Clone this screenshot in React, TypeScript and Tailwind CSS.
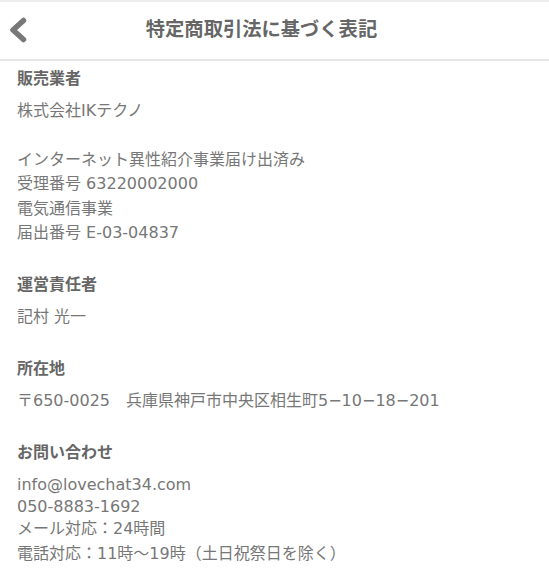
const font = { fontFamily: '"DejaVu Sans", "Noto Sans CJK JP", sans-serif' };

type Section = {
  title: string;
  lines: string[];
};

const sections: Section[] = [
  {
    title: "販売業者",
    lines: [
      "株式会社IKテクノ",
      "",
      "インターネット異性紹介事業届け出済み",
      "受理番号 63220002000",
      "電気通信事業",
      "届出番号 E-03-04837",
    ],
  },
  { title: "運営責任者", lines: ["記村 光一"] },
  {
    title: "所在地",
    lines: ["〒650-0025　兵庫県神戸市中央区相生町5−10−18−201"],
  },
];

const BackIcon = () => (
  <svg width="18" height="26" viewBox="0 0 18 26" fill="none">
    <polyline
      points="14.5,3.5 4,13 14.5,22.5"
      stroke="#787878"
      strokeWidth="5.5"
      strokeLinecap="round"
      strokeLinejoin="round"
    />
  </svg>
);

export default function App() {
  return (
    <div className="min-h-[576px] w-full bg-white text-[#777]" style={font}>
      <header className="relative flex h-[61px] items-center justify-center border-t-2 border-b-2 border-t-[#ececec] border-b-[#e6e6e6] bg-white pr-[26px]">
        <button className="absolute left-[9px] top-[15px]">
          <BackIcon />
        </button>
        <h1 className="text-[19.3px] font-bold text-[#666]">特定商取引法に基づく表記</h1>
      </header>

      <main className="px-[17px] pt-[4.5px]">
        {sections.map((s, i) => (
          <section key={s.title} className={i > 0 ? "pt-[26.5px]" : ""}>
            <h2 className="text-[16px] font-bold leading-[25px] text-[#666]">{s.title}</h2>
            <div className="pt-[8px] text-[16px] leading-[24.5px]">
              {s.lines.map((l, j) => (
                <div key={j} className="h-[24.5px] whitespace-nowrap">
                  {l}
                </div>
              ))}
            </div>
          </section>
        ))}

        <section className="pt-[26.5px]">
          <h2 className="text-[16px] font-bold leading-[25px] text-[#666]">お問い合わせ</h2>
          <div className="pt-[8px] text-[16px]">
            <div className="leading-[24px]">info@lovechat34.com</div>
            <div className="leading-[20px]">050-8883-1692</div>
            <div className="leading-[24px]">メール対応：24時間</div>
            <div className="leading-[26px] whitespace-nowrap">電話対応：11時～19時（土日祝祭日を除く）</div>
          </div>
        </section>
      </main>
    </div>
  );
}
